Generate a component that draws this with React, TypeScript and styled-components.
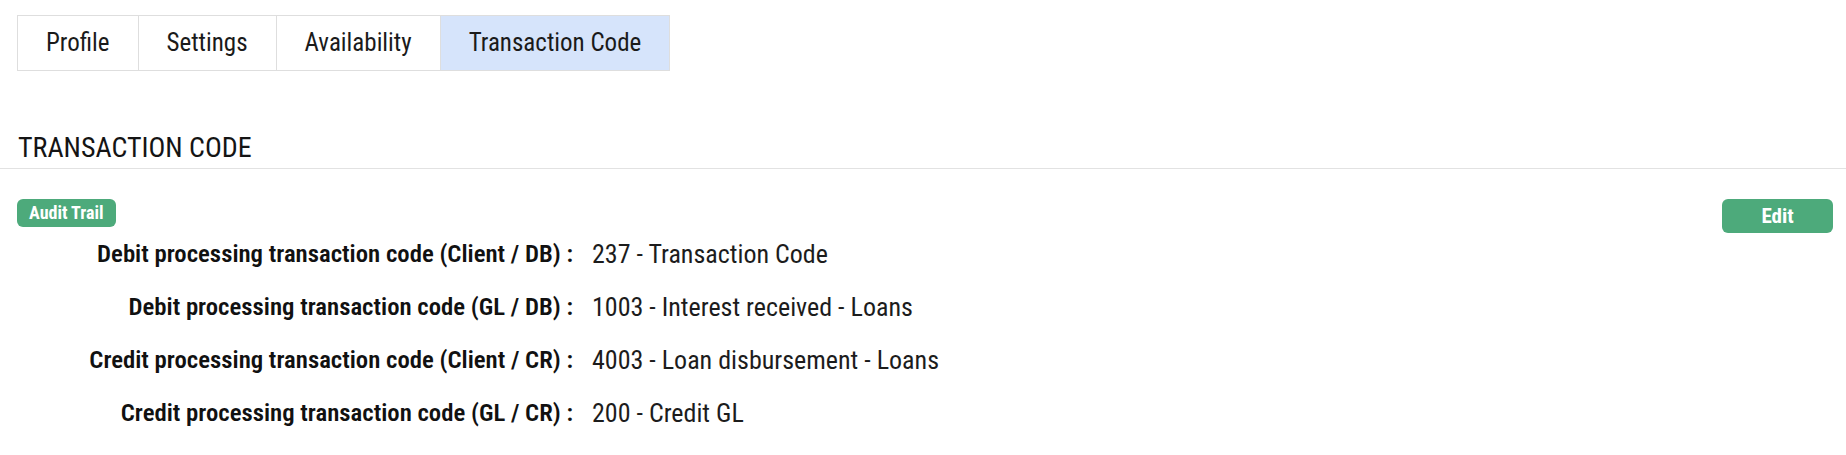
import React from "react";
import styled, { createGlobalStyle } from "styled-components";

const GlobalStyle = createGlobalStyle`
  html, body {
    margin: 0;
    padding: 0;
    background: #ffffff;
  }
  body {
    font-family: "Roboto Condensed", "Liberation Sans", sans-serif;
    color: #161616;
  }
`;

const Page = styled.div`
  display: flex;
  flex-direction: column;
  padding-top: 15px;
`;

const TabBar = styled.div`
  display: inline-flex;
  align-self: flex-start;
  margin-left: 17px;
  border: 1px solid #dedede;
`;

const Tab = styled.button<{ $active?: boolean }>`
  appearance: none;
  margin: 0;
  padding: 0 28px;
  height: 54px;
  line-height: 54px;
  border: none;
  background: ${(p) => (p.$active ? "#d6e4fb" : "#ffffff")};
  font-family: inherit;
  font-size: 25px;
  font-weight: 400;
  color: #1a1a1a;
  cursor: pointer;
  & + & {
    border-left: 1px solid #dedede;
  }
`;

const SectionTitle = styled.h2`
  margin: 60px 0 0;
  padding: 0 17px 3px 18px;
  font-size: 28px;
  font-weight: 400;
  line-height: 34px;
  color: #141414;
  border-bottom: 1px solid #e2e2e2;
`;

const Content = styled.div`
  display: flex;
  flex-direction: column;
  padding: 30px 13px 0 17px;
`;

const ActionBar = styled.div`
  display: flex;
  justify-content: space-between;
  align-items: flex-start;
`;

const Badge = styled.span`
  display: inline-block;
  height: 28px;
  line-height: 28px;
  padding: 0 12px;
  border-radius: 6px;
  background: #4daa7b;
  color: #ffffff;
  font-size: 18px;
  font-weight: 700;
`;

const EditButton = styled.button`
  appearance: none;
  width: 111px;
  height: 34px;
  line-height: 34px;
  padding: 0;
  border: none;
  border-radius: 6px;
  background: #4daa7b;
  color: #ffffff;
  font-family: inherit;
  font-size: 21px;
  font-weight: 700;
  cursor: pointer;
`;

const FieldList = styled.dl`
  margin: 0;
  display: grid;
  grid-template-columns: 556px 1fr;
  column-gap: 19px;
`;

const Label = styled.dt`
  margin: 0;
  text-align: right;
  font-size: 24.75px;
  font-weight: 600;
  line-height: 42px;
  padding-bottom: 11px;
  color: #111111;
  white-space: nowrap;
`;

const Value = styled.dd`
  margin: 0;
  font-size: 26px;
  font-weight: 400;
  line-height: 42px;
  padding-bottom: 11px;
  color: #1c1c1c;
  white-space: nowrap;
`;

const tabs = ["Profile", "Settings", "Availability", "Transaction Code"];

const fields: [string, string][] = [
  ["Debit processing transaction code (Client / DB) :", "237 - Transaction Code"],
  ["Debit processing transaction code (GL / DB) :", "1003 - Interest received - Loans"],
  ["Credit processing transaction code (Client / CR) :", "4003 - Loan disbursement - Loans"],
  ["Credit processing transaction code (GL / CR) :", "200 - Credit GL"],
];

export default function App() {
  return (
    <>
      <GlobalStyle />
      <Page>
        <TabBar>
          {tabs.map((t) => (
            <Tab key={t} $active={t === "Transaction Code"}>
              {t}
            </Tab>
          ))}
        </TabBar>
        <SectionTitle>TRANSACTION CODE</SectionTitle>
        <Content>
          <ActionBar>
            <Badge>Audit Trail</Badge>
            <EditButton>Edit</EditButton>
          </ActionBar>
          <FieldList>
            {fields.map(([l, v]) => (
              <React.Fragment key={l}>
                <Label>{l}</Label>
                <Value>{v}</Value>
              </React.Fragment>
            ))}
          </FieldList>
        </Content>
      </Page>
    </>
  );
}
